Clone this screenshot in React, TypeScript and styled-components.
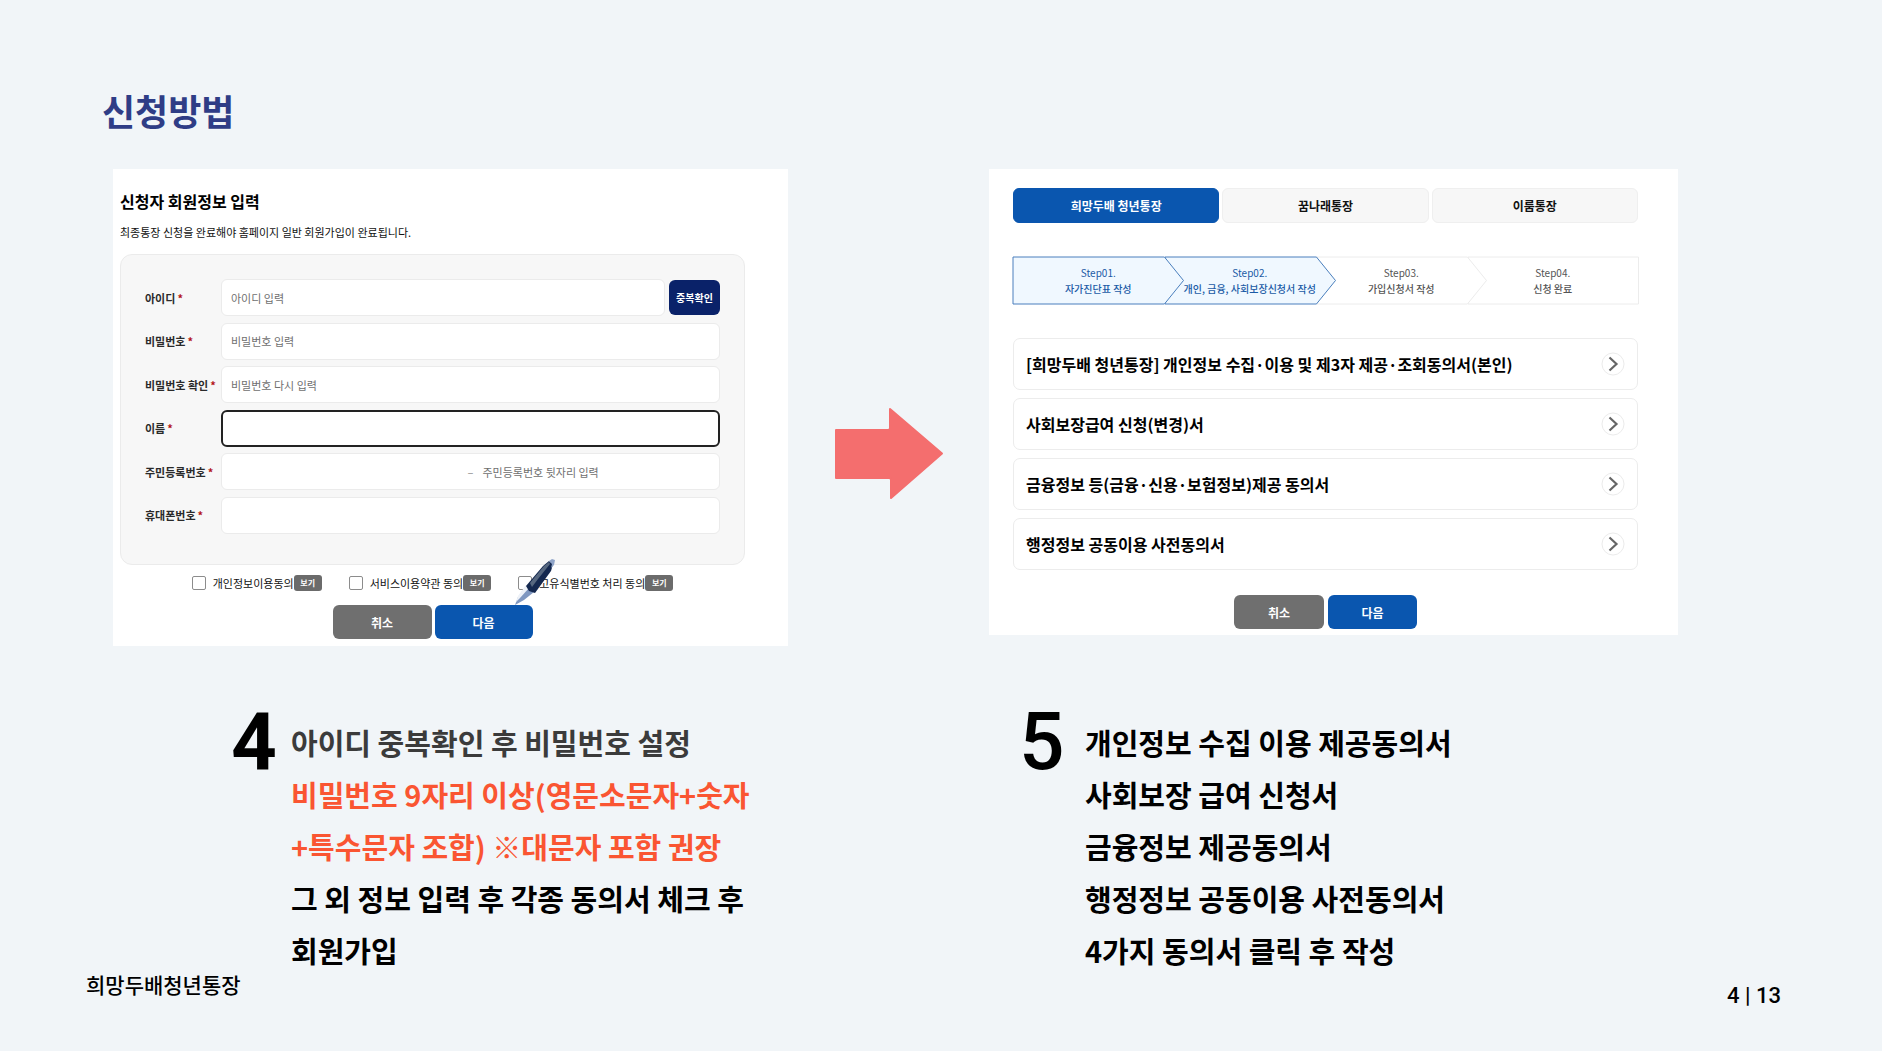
import React from "react";
import styled, { createGlobalStyle } from "styled-components";

const GlobalStyle = createGlobalStyle`
  *, *::before, *::after { box-sizing: border-box; }
  body {
    margin: 0;
    background: #f1f5f8;
    color: #000;
    font-family: "Noto Sans CJK KR", "Noto Sans", sans-serif;
  }
  button, input { font-family: inherit; margin: 0; }
  h1, h2, p, ul, ol { margin: 0; padding: 0; }
  ul, ol { list-style: none; }
`;

const Page = styled.div`
  display: flex;
  flex-direction: column;
  min-height: 100vh;
  padding-top: 90px;
`;

const Title = styled.h1`
  padding: 0 102px;
  font-size: 36px;
  line-height: 40px;
  font-weight: 700;
  color: #2f3d86;
`;

const Board = styled.main`
  display: grid;
  grid-template-columns: minmax(0, 675fr) 201px minmax(0, 689fr);
  align-items: start;
  row-gap: 70px;
  margin-top: 39px;
  padding: 0 204px 0 113px;
`;

const Card = styled.section`
  background: #fff;
`;

const SignupCard = styled(Card)`
  position: relative;
  padding: 20px 43px 7px 7px;
`;

const CardTitle = styled.h2`
  font-size: 16px;
  line-height: 24px;
  font-weight: 700;
`;

const CardText = styled.p`
  margin: 9px 0 12px;
  font-size: 11px;
  line-height: 20px;
  color: #111;
`;

const FormPanel = styled.div`
  display: flex;
  flex-direction: column;
  justify-content: space-between;
  min-height: 311px;
  padding: 24px 24px 30px;
  border: 1px solid #ebebeb;
  border-radius: 12px;
  background: #f7f7f7;
`;

const FieldRow = styled.div`
  display: flex;
  align-items: center;
  gap: 4px;
  height: 37px;
`;

const FieldLabel = styled.label`
  flex: none;
  width: 72px;
  font-size: 11px;
  line-height: 16px;
  font-weight: 700;
  color: #2a2a2a;
  white-space: nowrap;
`;

const Required = styled.span`
  margin-left: 2px;
  color: #b3161b;
`;

const TextInput = styled.input<{ $active?: boolean }>`
  flex: 1;
  min-width: 0;
  height: 37px;
  padding: 0 9px;
  border: ${(p) => (p.$active ? "2px solid #222" : "1px solid #ebebeb")};
  border-radius: 6px;
  background: #fff;
  font-size: 11px;
  color: #222;
  outline: none;
  &::placeholder { color: #6f6f6f; opacity: 1; }
`;

const SplitField = styled.div`
  display: flex;
  flex: 1;
  align-items: center;
  min-width: 0;
  height: 37px;
  border: 1px solid #ebebeb;
  border-radius: 6px;
  background: #fff;
  font-size: 11px;
  color: #8a8a8a;
`;

const BareInput = styled.input`
  flex: 1;
  min-width: 0;
  height: 32px;
  padding: 0 9px;
  border: 0;
  background: transparent;
  font-size: 11px;
  outline: none;
  &::placeholder { color: #6f6f6f; opacity: 1; }
`;

const CheckButton = styled.button`
  width: 51px;
  height: 35px;
  padding: 0;
  border: 0;
  border-radius: 6px;
  background: #0a2269;
  color: #fff;
  font-size: 10px;
  font-weight: 700;
`;

const Consents = styled.div`
  display: flex;
  justify-content: center;
  gap: 27px;
  margin-top: 9px;
  height: 18px;
`;

const Consent = styled.div`
  display: flex;
  align-items: center;
`;

const ConsentLabel = styled.label`
  display: flex;
  align-items: center;
  gap: 7px;
  font-size: 11px;
  line-height: 16px;
  color: #111;
  white-space: nowrap;
`;

const Checkbox = styled.input`
  appearance: none;
  width: 14px;
  height: 14px;
  border: 1px solid #8c8c8c;
  border-radius: 2px;
  background: #fff;
`;

const ViewButton = styled.button`
  width: 28px;
  height: 16px;
  padding: 0;
  border: 0;
  border-radius: 3px;
  background: #6b6b6b;
  color: #fff;
  font-size: 8px;
  line-height: 16px;
  font-weight: 700;
`;

const Actions = styled.div<{ $top: number; $gap: number }>`
  display: flex;
  justify-content: center;
  gap: ${(p) => p.$gap}px;
  margin-top: ${(p) => p.$top}px;
`;

const ActionButton = styled.button<{ $primary?: boolean; $width: number }>`
  width: ${(p) => p.$width}px;
  height: 34px;
  padding: 0;
  border: 0;
  border-radius: 6px;
  background: ${(p) => (p.$primary ? "#0a56af" : "#6f6f6f")};
  color: #fff;
  font-size: 12px;
  font-weight: 700;
`;

const PenIcon = styled.svg`
  position: absolute;
  left: 401px;
  top: 389px;
  width: 43px;
  height: 48px;
  pointer-events: none;
`;

const ArrowCell = styled.div`
  display: flex;
  justify-content: center;
  padding-top: 237px;
`;

const AccountCard = styled(Card)`
  padding: 19px 40px 6px 24px;
`;

const Tabs = styled.div`
  display: flex;
  gap: 3px;
`;

const Tab = styled.button<{ $active?: boolean }>`
  flex: 1;
  height: 35px;
  padding: 0;
  border: 1px solid ${(p) => (p.$active ? "#0a56af" : "#efefef")};
  border-radius: 6px;
  background: ${(p) => (p.$active ? "#0a56af" : "#f7f7f7")};
  color: ${(p) => (p.$active ? "#fff" : "#111")};
  font-size: 12px;
  font-weight: 700;
`;

const Steps = styled.ol`
  display: flex;
  margin-top: 34px;
`;

const Step = styled.li<{ $active: boolean; $order: number }>`
  position: relative;
  z-index: ${(p) => p.$order};
  display: flex;
  flex: 1;
  flex-direction: column;
  align-items: center;
  justify-content: center;
  height: 47px;
  color: ${(p) => (p.$active ? "#1b5ba6" : "#555")};
  font-size: 10px;
  line-height: 16px;
  white-space: nowrap;
  & + & { margin-left: -19px; }
`;

const StepShape = styled.svg`
  position: absolute;
  inset: 0;
  width: 100%;
  height: 100%;
  overflow: visible;
`;

const StepNumber = styled.span`
  position: relative;
`;

const StepName = styled.span`
  position: relative;
  font-weight: 500;
`;

const Agreements = styled.ul`
  display: flex;
  flex-direction: column;
  gap: 8px;
  margin-top: 34px;
`;

const AgreementButton = styled.button`
  display: flex;
  align-items: center;
  justify-content: space-between;
  width: 100%;
  height: 52px;
  padding: 0 12px;
  border: 1px solid #ececec;
  border-radius: 7px;
  background: #fff;
  color: #000;
  font-size: 16px;
  font-weight: 700;
  text-align: left;
`;

const Caption = styled.div<{ $indent: number; $gap: number }>`
  display: flex;
  gap: ${(p) => p.$gap}px;
  padding-left: ${(p) => p.$indent}px;
`;

const CaptionNumber = styled.span<{ $weight: number }>`
  flex: none;
  width: 44px;
  font-family: Roboto, "Noto Sans", sans-serif;
  font-size: 80px;
  line-height: 52px;
  font-weight: ${(p) => p.$weight};
`;

const CaptionText = styled.p`
  font-size: 29px;
  line-height: 52px;
  font-weight: 700;
  white-space: nowrap;
`;

const CaptionLine = styled.span<{ $color?: string }>`
  display: block;
  color: ${(p) => p.$color ?? "#000"};
`;

const Footer = styled.footer`
  display: flex;
  align-items: flex-start;
  justify-content: space-between;
  margin-top: auto;
  padding: 0 101px 47px 86px;
  line-height: 16px;
`;

const FooterName = styled.span`
  font-size: 21px;
  font-weight: 500;
`;

const PageNumber = styled.span`
  padding-top: 12px;
  font-family: Roboto, sans-serif;
  font-size: 22px;
  font-weight: 500;
`;

const plainFields = [
  { id: "pw", label: "비밀번호", placeholder: "비밀번호 입력" },
  { id: "pw2", label: "비밀번호 확인", placeholder: "비밀번호 다시 입력" },
  { id: "name", label: "이름", placeholder: "", active: true },
];

const consents = ["개인정보이용동의", "서비스이용약관 동의", "고유식별번호 처리 동의"];

const steps = [
  "자가진단표 작성",
  "개인, 금융, 사회보장신청서 작성",
  "가입신청서 작성",
  "신청 완료",
];

const agreements = [
  "[희망두배 청년통장] 개인정보 수집·이용 및 제3자 제공·조회동의서(본인)",
  "사회보장급여 신청(변경)서",
  "금융정보 등(금융·신용·보험정보)제공 동의서",
  "행정정보 공동이용 사전동의서",
];

function Label({ id, text }: { id: string; text: string }) {
  return (
    <FieldLabel htmlFor={id}>
      {text}
      <Required>*</Required>
    </FieldLabel>
  );
}

function SignupForm() {
  return (
    <SignupCard>
      <CardTitle>신청자 회원정보 입력</CardTitle>
      <CardText>최종통장 신청을 완료해야 홈페이지 일반 회원가입이 완료됩니다.</CardText>
      <FormPanel>
        <FieldRow>
          <Label id="uid" text="아이디" />
          <TextInput id="uid" placeholder="아이디 입력" />
          <CheckButton type="button">중복확인</CheckButton>
        </FieldRow>
        {plainFields.map((f) => (
          <FieldRow key={f.id}>
            <Label id={f.id} text={f.label} />
            <TextInput id={f.id} placeholder={f.placeholder} $active={f.active} />
          </FieldRow>
        ))}
        <FieldRow>
          <Label id="rrn" text="주민등록번호" />
          <SplitField>
            <BareInput id="rrn" />
            <span>–</span>
            <BareInput aria-label="주민등록번호 뒷자리" placeholder="주민등록번호 뒷자리 입력" />
          </SplitField>
        </FieldRow>
        <FieldRow>
          <Label id="phone" text="휴대폰번호" />
          <TextInput id="phone" />
        </FieldRow>
      </FormPanel>
      <Consents>
        {consents.map((text) => (
          <Consent key={text}>
            <ConsentLabel>
              <Checkbox type="checkbox" />
              {text}
            </ConsentLabel>
            <ViewButton type="button">보기</ViewButton>
          </Consent>
        ))}
      </Consents>
      <Actions $top={13} $gap={3}>
        <ActionButton type="button" $width={99}>취소</ActionButton>
        <ActionButton type="button" $width={98} $primary>다음</ActionButton>
      </Actions>
      <PenIcon viewBox="0 0 43 48" aria-hidden="true">
        <path d="M1 47 L4 39 L12 28 L20 34 L10 42 Z" fill="#7f97c0" />
        <path d="M2 44 L4 38 L12 27 L15 30 L6 40 Z" fill="#eef2f8" />
        <path d="M12 28 L29 8 L35 3 L39 6 L37 13 L21 35 L15 33 Z" fill="#14284f" />
        <path d="M16 25 L30 8 L35 4 L36 6 L24 21 L18 29 Z" fill="#56677f" />
        <path d="M35 3 L38 1 L41 2 L40 7 L37 10 L38 6 Z" fill="#8fa4c8" />
      </PenIcon>
    </SignupCard>
  );
}

function StepItem({ index, name }: { index: number; name: string }) {
  const active = index < 2;
  const last = index === steps.length - 1;
  return (
    <Step $active={active} $order={steps.length - index}>
      <StepShape viewBox="0 0 170 48" preserveAspectRatio="none" aria-hidden="true">
        <path
          d={last ? "M0 0H170V48H0Z" : "M0 0H151L170 24L151 48H0Z"}
          fill={active ? "#f0f8ff" : "#fff"}
          stroke={active ? "#4a7fbd" : "#ececec"}
          vectorEffect="non-scaling-stroke"
        />
      </StepShape>
      <StepNumber>{`Step0${index + 1}.`}</StepNumber>
      <StepName>{name}</StepName>
    </Step>
  );
}

function AccountForms() {
  return (
    <AccountCard>
      <Tabs>
        <Tab type="button" $active>희망두배 청년통장</Tab>
        <Tab type="button">꿈나래통장</Tab>
        <Tab type="button">이룸통장</Tab>
      </Tabs>
      <Steps>
        {steps.map((name, i) => (
          <StepItem key={name} index={i} name={name} />
        ))}
      </Steps>
      <Agreements>
        {agreements.map((text) => (
          <li key={text}>
            <AgreementButton type="button">
              {text}
              <svg width="24" height="24" viewBox="0 0 24 24" fill="none" aria-hidden="true">
                <circle cx="12" cy="12" r="11" stroke="#ebebeb" />
                <path d="M8.500 5.500L15.500 12L8.500 18.500" stroke="#666" strokeWidth="2.200" />
              </svg>
            </AgreementButton>
          </li>
        ))}
      </Agreements>
      <Actions $top={25} $gap={4}>
        <ActionButton type="button" $width={90}>취소</ActionButton>
        <ActionButton type="button" $width={89} $primary>다음</ActionButton>
      </Actions>
    </AccountCard>
  );
}

export default function App() {
  return (
    <>
      <GlobalStyle />
      <Page>
        <Title>신청방법</Title>
        <Board>
          <SignupForm />
          <ArrowCell>
            <svg width="110" height="95" viewBox="0 0 110 95" aria-hidden="true">
              <path
                d="M2 24H54Q56 24 56 22V3L108 47.500L57 92V74Q57 72 55 72H2Z"
                fill="#f46e6e"
                stroke="#f46e6e"
                strokeWidth="2"
                strokeLinejoin="round"
              />
            </svg>
          </ArrowCell>
          <AccountForms />
          <Caption $indent={118} $gap={16}>
            <CaptionNumber $weight={700}>4</CaptionNumber>
            <CaptionText>
              <CaptionLine $color="#3b3b3b">아이디 중복확인 후 비밀번호 설정</CaptionLine>
              <CaptionLine $color="#fa5532">비밀번호 9자리 이상(영문소문자+숫자</CaptionLine>
              <CaptionLine $color="#fa5532">+특수문자 조합) ※대문자 포함 권장</CaptionLine>
              <CaptionLine>그 외 정보 입력 후 각종 동의서 체크 후</CaptionLine>
              <CaptionLine>회원가입</CaptionLine>
            </CaptionText>
          </Caption>
          <span />
          <Caption $indent={30} $gap={22}>
            <CaptionNumber $weight={500}>5</CaptionNumber>
            <CaptionText>
              <CaptionLine>개인정보 수집 이용 제공동의서</CaptionLine>
              <CaptionLine>사회보장 급여 신청서</CaptionLine>
              <CaptionLine>금융정보 제공동의서</CaptionLine>
              <CaptionLine>행정정보 공동이용 사전동의서</CaptionLine>
              <CaptionLine>4가지 동의서 클릭 후 작성</CaptionLine>
            </CaptionText>
          </Caption>
        </Board>
        <Footer>
          <FooterName>희망두배청년통장</FooterName>
          <PageNumber>4 | 13</PageNumber>
        </Footer>
      </Page>
    </>
  );
}
